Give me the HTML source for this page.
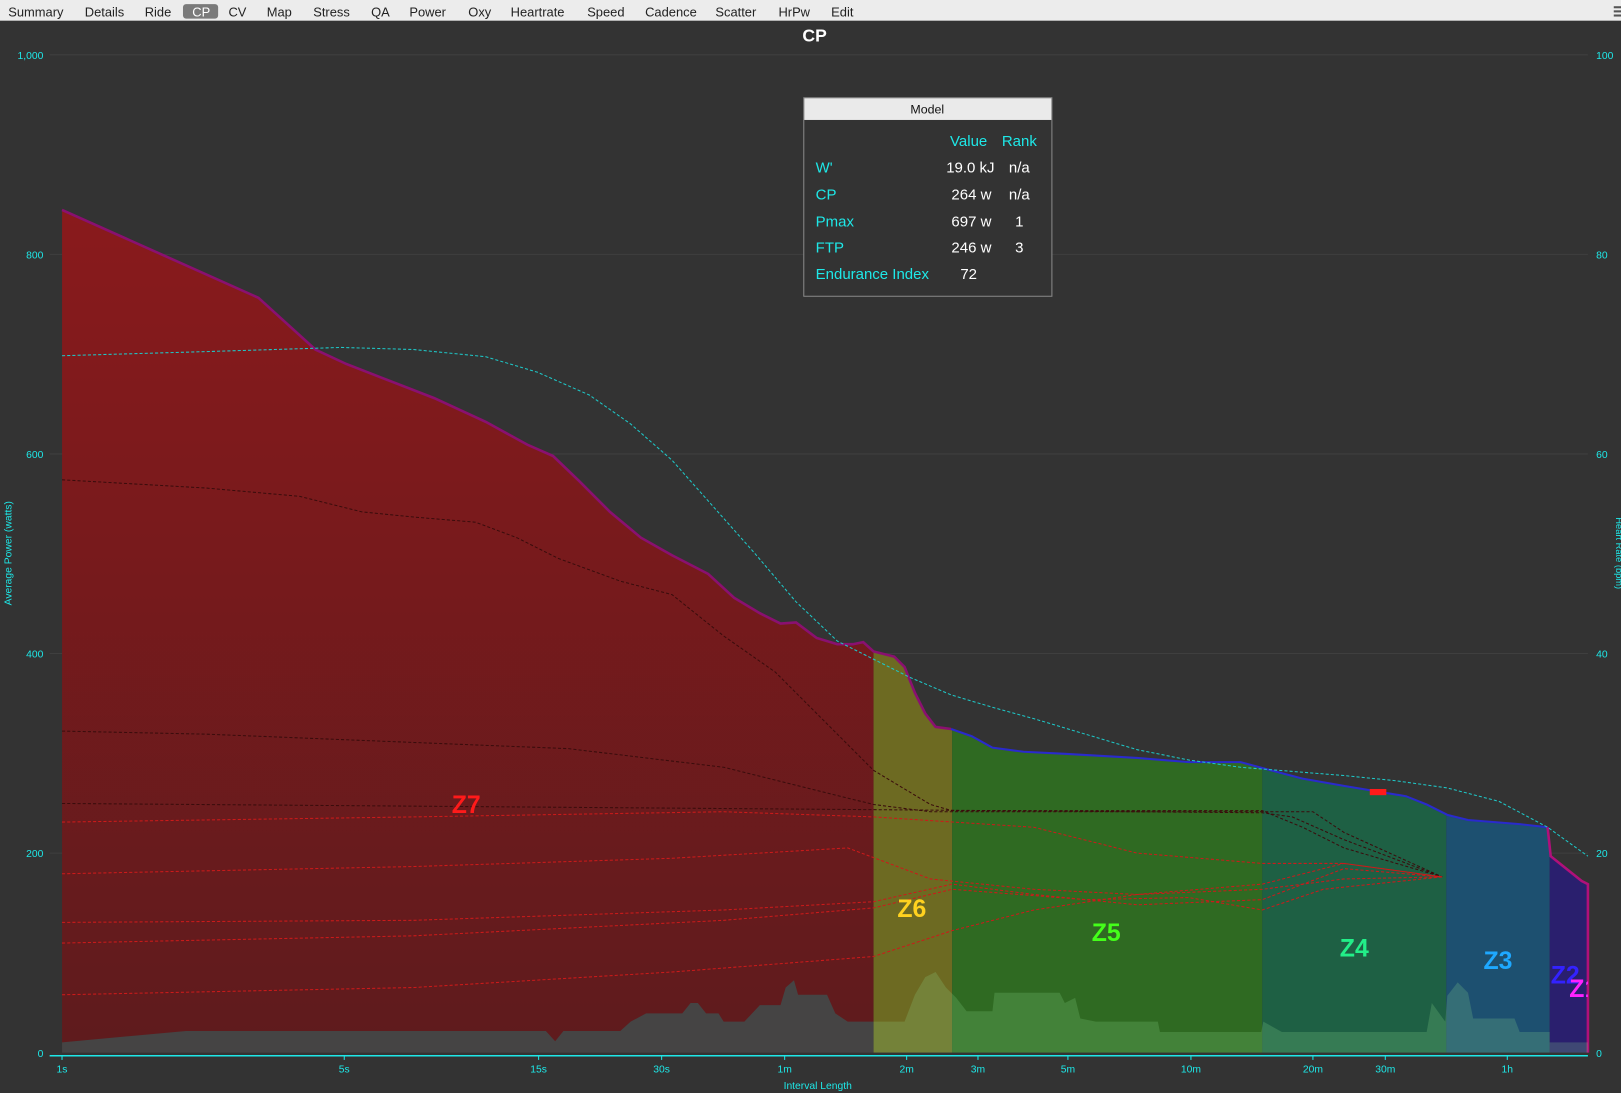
<!DOCTYPE html>
<html><head><meta charset="utf-8"><style>
html,body{margin:0;padding:0;background:#333;overflow:hidden}
svg{display:block}
text{font-family:"Liberation Sans","DejaVu Sans",sans-serif}
</style></head><body>
<svg width="1621" height="1093" viewBox="0 0 1568 1057" preserveAspectRatio="none" xmlns="http://www.w3.org/2000/svg">
<defs>
<clipPath id="c"><polygon points="60,203 250,288 305,338 335,352 420,385 470,408 510,430 535,441 560,465 590,495 620,520 650,537 685,555 710,578 735,593 755,603 770,602 790,617 810,623 825,623 835,621 845,630 865,635 875,645 885,670 895,690 905,703 920,705 940,712 960,723 990,727 1030,729 1100,733 1150,737 1200,737 1222,743 1260,753 1300,760 1360,770 1380,778 1400,788 1420,793 1470,797 1497,800 1500,828 1530,852 1536,855 1536,1018 60,1018"/></clipPath>
<clipPath id="pa"><rect x="48" y="40" width="1488" height="980"/></clipPath>
<linearGradient id="rg" x1="0" y1="0" x2="0" y2="1"><stop offset="0" stop-color="#8a1a1c"/><stop offset="1" stop-color="#5e1b1d"/></linearGradient>
</defs>
<rect width="1568" height="1057" fill="#333"/>
<rect width="1568" height="20" fill="#ececec"/>
<rect x="177" y="4" width="34" height="14" rx="3" fill="#7a7a7a"/>
<g font-size="12.5" fill="#222">
<text x="8" y="16">Summary</text><text x="82" y="16">Details</text><text x="140" y="16">Ride</text><text x="186" y="16" fill="#fff">CP</text><text x="221" y="16">CV</text><text x="258" y="16">Map</text><text x="303" y="16">Stress</text><text x="359" y="16">QA</text><text x="396" y="16">Power</text><text x="453" y="16">Oxy</text><text x="494" y="16">Heartrate</text><text x="568" y="16">Speed</text><text x="624" y="16">Cadence</text><text x="692" y="16">Scatter</text><text x="753" y="16">HrPw</text><text x="804" y="16">Edit</text>
</g>
<rect x="1561" y="6" width="7" height="2" fill="#555"/><rect x="1561" y="10" width="7" height="2" fill="#555"/><rect x="1561" y="14" width="7" height="2" fill="#555"/>
<text x="788" y="40" font-size="17" font-weight="bold" fill="#fff" text-anchor="middle">CP</text>
<g stroke="#3f3f3f" stroke-width="1">
<line x1="48" y1="53" x2="1536" y2="53"/><line x1="48" y1="246" x2="1536" y2="246"/><line x1="48" y1="439" x2="1536" y2="439"/><line x1="48" y1="632" x2="1536" y2="632"/><line x1="48" y1="825" x2="1536" y2="825"/>
</g>
<g font-size="10" fill="#1ee8e8" text-anchor="end">
<text x="42" y="57">1,000</text><text x="42" y="250">800</text><text x="42" y="443">600</text><text x="42" y="636">400</text><text x="42" y="829">200</text><text x="42" y="1022">0</text>
</g>
<g font-size="10" fill="#1ee8e8">
<text x="1544" y="57">100</text><text x="1544" y="250">80</text><text x="1544" y="443">60</text><text x="1544" y="636">40</text><text x="1544" y="829">20</text><text x="1544" y="1022">0</text>
</g>
<text transform="translate(11,535) rotate(-90)" font-size="10" fill="#1ee8e8" text-anchor="middle">Average Power (watts)</text>
<text transform="translate(1563,535) rotate(90)" font-size="9" fill="#1ee8e8" text-anchor="middle">Heart Rate (bpm)</text>
<g clip-path="url(#c)">
<rect x="60" y="190" width="785" height="830" fill="url(#rg)"/>
<rect x="845" y="190" width="76" height="830" fill="#6d6a22"/>
<rect x="921" y="190" width="300" height="830" fill="#2f6a22"/>
<rect x="1221" y="190" width="178" height="830" fill="#1e6044"/>
<rect x="1399" y="190" width="100" height="830" fill="#1d5070"/>
<rect x="1499" y="190" width="37" height="830" fill="#2a1f6e"/>
</g>
<polyline fill="none" stroke="#8a1070" stroke-width="2.5" points="60,203 250,288 305,338 335,352 420,385 470,408 510,430 535,441 560,465 590,495 620,520 650,537 685,555 710,578 735,593 755,603 770,602 790,617 810,623 825,623 835,621 845,630 865,635 875,645 885,670 895,690 905,703 920,705"/>
<polyline fill="none" stroke="#2a2acc" stroke-width="2" points="920,705 940,712 960,723 990,727 1030,729 1100,733 1150,737 1200,737 1222,743 1260,753 1300,760 1360,770 1380,778 1400,788 1420,793 1470,797 1497,800"/>
<polyline fill="none" stroke="#b0107a" stroke-width="2.5" points="1497,800 1500,828 1530,852 1536,855 1536,1018"/>
<polygon fill="#454444" points="60,1008 180,997 528,997 537,1007 545,997 600,997 610,988 625,980 660,980 668,970 675,970 683,980 695,980 700,988 720,988 735,972 755,972 760,955 768,948 772,962 800,962 808,980 820,988 845,988 845,1018 60,1018"/>
<polygon fill="rgba(140,220,140,0.22)" points="845,988 875,988 885,962 895,945 905,940 915,955 925,965 935,978 960,978 962,960 1025,960 1030,970 1040,965 1045,985 1060,988 1120,988 1122,998 1130,998 1220,998 1222,988 1240,998 1380,998 1385,970 1398,988 1400,963 1410,950 1420,960 1425,985 1465,985 1470,998 1499,998 1499,1008 1536,1008 1536,1018 845,1018"/>
<g fill="none" stroke-dasharray="3,2" stroke-width="1">
<polyline stroke="#3a0c0c" points="60,464 200,472 290,480 350,495 400,500 460,505 500,520 540,540 600,562 650,575 700,615 750,650 800,700 845,745 900,778 921,784 1221,784 1260,800 1300,820 1395,848"/>
<polyline stroke="#3a0c0c" points="60,707 200,710 400,718 550,724 700,742 845,778 900,785 1221,785 1270,785 1300,805 1395,848"/>
<polyline stroke="#3a0c0c" points="60,777 845,783 1221,786 1250,790 1300,812 1395,848"/>
<polyline stroke="#cc1a1a" points="60,795 400,790 700,785 845,790 1000,800 1100,825 1221,835 1300,835 1395,848"/>
<polyline stroke="#cc1a1a" points="60,845 400,838 650,830 820,820 900,850 1000,860 1100,865 1221,860 1300,850 1395,848"/>
<polyline stroke="#cc1a1a" points="60,892 400,890 700,880 845,872 921,855 1000,865 1100,875 1221,870 1300,840 1395,848"/>
<polyline stroke="#cc1a1a" points="60,912 400,905 700,890 845,878 921,860 1050,870 1150,868 1221,880 1280,860 1395,848"/>
<polyline stroke="#cc1a1a" points="60,962 400,955 650,940 845,925 921,900 1000,880 1100,865 1221,855 1300,835 1395,848"/>
</g>
<polyline fill="none" stroke="#1ec8c8" stroke-width="1" stroke-dasharray="3,2" points="60,344 200,340 330,336 400,338 470,345 520,360 570,382 610,410 650,445 690,490 730,535 770,582 810,620 850,640 880,655 920,672 960,684 1000,695 1050,710 1100,725 1150,735 1200,742 1250,746 1300,750 1350,755 1400,762 1450,775 1497,800 1536,828"/>
<rect x="1325" y="763" width="16" height="6" fill="#ff1a1a"/>
<g font-size="24" font-weight="bold" clip-path="url(#pa)">
<text x="451" y="786" fill="#ff1a1a" text-anchor="middle">Z7</text>
<text x="882" y="887" fill="#ffd21f" text-anchor="middle">Z6</text>
<text x="1070" y="910" fill="#44ff1a" text-anchor="middle">Z5</text>
<text x="1310" y="925" fill="#22ee88" text-anchor="middle">Z4</text>
<text x="1449" y="937" fill="#1ea8ff" text-anchor="middle">Z3</text>
<text x="1500" y="951" fill="#3322ff">Z2</text>
<text x="1518" y="964" fill="#ff22ff">Z1</text>
</g>
<line x1="48" y1="1021" x2="1536" y2="1021" stroke="#1ee8e8" stroke-width="1.5"/>
<g stroke="#1ee8e8"><line x1="60" y1="1021" x2="60" y2="1025"/><line x1="333" y1="1021" x2="333" y2="1025"/><line x1="521" y1="1021" x2="521" y2="1025"/><line x1="640" y1="1021" x2="640" y2="1025"/><line x1="759" y1="1021" x2="759" y2="1025"/><line x1="877" y1="1021" x2="877" y2="1025"/><line x1="946" y1="1021" x2="946" y2="1025"/><line x1="1033" y1="1021" x2="1033" y2="1025"/><line x1="1152" y1="1021" x2="1152" y2="1025"/><line x1="1270" y1="1021" x2="1270" y2="1025"/><line x1="1340" y1="1021" x2="1340" y2="1025"/><line x1="1458" y1="1021" x2="1458" y2="1025"/></g>
<g font-size="10" fill="#1ee8e8" text-anchor="middle">
<text x="60" y="1037">1s</text><text x="333" y="1037">5s</text><text x="521" y="1037">15s</text><text x="640" y="1037">30s</text><text x="759" y="1037">1m</text><text x="877" y="1037">2m</text><text x="946" y="1037">3m</text><text x="1033" y="1037">5m</text><text x="1152" y="1037">10m</text><text x="1270" y="1037">20m</text><text x="1340" y="1037">30m</text><text x="1458" y="1037">1h</text>
<text x="791" y="1053">Interval Length</text>
</g>
<rect x="777.5" y="94.5" width="240" height="192" fill="#333" stroke="#888"/>
<rect x="778" y="95" width="239" height="21" fill="#eaeaea"/>
<text x="897" y="110" font-size="12" fill="#111" text-anchor="middle">Model</text>
<g font-size="14.5">
<text x="937" y="141" fill="#1ee8e8" text-anchor="middle">Value</text><text x="986" y="141" fill="#1ee8e8" text-anchor="middle">Rank</text>
<text x="789" y="167" fill="#1ee8e8">W'</text><text x="962" y="167" fill="#fff" text-anchor="end">19.0 kJ</text><text x="986" y="167" fill="#fff" text-anchor="middle">n/a</text>
<text x="789" y="193" fill="#1ee8e8">CP</text><text x="959" y="193" fill="#fff" text-anchor="end">264 w</text><text x="986" y="193" fill="#fff" text-anchor="middle">n/a</text>
<text x="789" y="219" fill="#1ee8e8">Pmax</text><text x="959" y="219" fill="#fff" text-anchor="end">697 w</text><text x="986" y="219" fill="#fff" text-anchor="middle">1</text>
<text x="789" y="244" fill="#1ee8e8">FTP</text><text x="959" y="244" fill="#fff" text-anchor="end">246 w</text><text x="986" y="244" fill="#fff" text-anchor="middle">3</text>
<text x="789" y="270" fill="#1ee8e8">Endurance Index</text><text x="937" y="270" fill="#fff" text-anchor="middle">72</text>
</g>
</svg>
</body></html>
